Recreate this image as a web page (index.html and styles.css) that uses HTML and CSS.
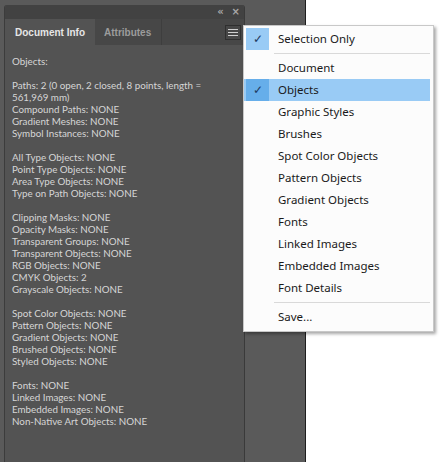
FILE: index.html
```html
<!DOCTYPE html>
<html lang="en">
<head>
    <meta charset="UTF-8">
    <title>Document Info</title>
    <link rel="stylesheet" href="styles.css">
</head>
<body>
    <div class="workspace">
        <div class="panel">
            <div class="titlebar">
                <span class="tb-icon collapse">&laquo;</span>
                <span class="tb-icon close">&times;</span>
            </div>
            <div class="tabs">
                <div class="tab active">Document Info</div>
                <div class="tab">Attributes</div>
                <div class="tab-fill">
                    <div class="menu-btn"><span></span><span></span><span></span></div>
                </div>
            </div>
            <div class="content">
                <p>Objects:</p>
                <p>Paths: 2 (0 open, 2 closed, 8 points, length =<br>561,969 mm)<br>Compound Paths: NONE<br>Gradient Meshes: NONE<br>Symbol Instances: NONE</p>
                <p>All Type Objects: NONE<br>Point Type Objects: NONE<br>Area Type Objects: NONE<br>Type on Path Objects: NONE</p>
                <p>Clipping Masks: NONE<br>Opacity Masks: NONE<br>Transparent Groups: NONE<br>Transparent Objects: NONE<br>RGB Objects: NONE<br>CMYK Objects: 2<br>Grayscale Objects: NONE</p>
                <p>Spot Color Objects: NONE<br>Pattern Objects: NONE<br>Gradient Objects: NONE<br>Brushed Objects: NONE<br>Styled Objects: NONE</p>
                <p>Fonts: NONE<br>Linked Images: NONE<br>Embedded Images: NONE<br>Non-Native Art Objects: NONE</p>
            </div>
        </div>
    </div>

    <div class="menu">
        <div class="item checked"><span class="check">&#10003;</span>Selection Only</div>
        <div class="sep"></div>
        <div class="item">Document</div>
        <div class="item checked hover"><span class="check">&#10003;</span>Objects</div>
        <div class="item">Graphic Styles</div>
        <div class="item">Brushes</div>
        <div class="item">Spot Color Objects</div>
        <div class="item">Pattern Objects</div>
        <div class="item">Gradient Objects</div>
        <div class="item">Fonts</div>
        <div class="item">Linked Images</div>
        <div class="item">Embedded Images</div>
        <div class="item">Font Details</div>
        <div class="sep"></div>
        <div class="item">Save...</div>
    </div>
</body>
</html>
```

FILE: styles.css
```css
html, body { margin: 0; padding: 0; }
body { background: #fff; width: 443px; height: 462px; overflow: hidden; position: relative; }

.workspace { width: 306px; height: 462px; background: #5a5a5a; border-right: 1px solid #1e1e1e; box-sizing: border-box; padding: 5px 0 0 4px; }
.panel { width: 241px; height: 457px; background: #535353; border-left: 1px solid #3c3c3c; border-right: 1px solid #3a3a3a; box-sizing: border-box; display: flex; flex-direction: column; border-radius: 3px 3px 0 0; overflow: hidden; }

.titlebar { height: 14px; background: #424242; display: flex; justify-content: flex-end; align-items: center; padding-right: 4px; gap: 8px; }
.tb-icon { color: #a8a8a8; font-family: "DejaVu Sans", sans-serif; font-size: 10px; line-height: 14px; font-weight: bold; }

.tabs { height: 26px; display: flex; background: #474747; }
.tab { font-family: "Liberation Sans", sans-serif; font-size: 10px; font-weight: bold; color: #9c9c9c; padding: 0 10px 0 9px; line-height: 27px; border-right: 1px solid #3e3e3e; }
.tab.active { background: #535353; color: #e6e6e6; border-right: none; padding: 0 10px; }
.tab-fill { flex: 1; display: flex; justify-content: flex-end; align-items: center; padding-right: 3px; }
.menu-btn { width: 14px; height: 13px; border: 1px solid #2f2f2f; display: flex; flex-direction: column; justify-content: center; align-items: center; gap: 2px; }
.menu-btn span { display: block; width: 10px; height: 1px; background: #d0d0d0; }

.content { flex: 1; padding: 10px 7px 4px; font-family: Lato, sans-serif; font-size: 9.8px; line-height: 12px; color: #d6d6d6; }
.content p { margin: 0 0 12px; }

.menu { position: absolute; left: 243px; top: 25px; width: 189px; background: #fcfcfc; border: 1px solid #c8c8c8; box-shadow: 2px 2px 3px rgba(0,0,0,0.35); padding: 2px 0 3px; font-family: "Noto Sans", sans-serif; font-size: 11.5px; color: #1a1a1a; }
.item { position: relative; height: 22px; line-height: 22px; padding-left: 34px; margin: 0 3px 0 0; }
.item.hover { background: #99cbf5; }
.check { position: absolute; left: 2px; top: 0; width: 23px; height: 22px; background: #99cbf5; color: #1f3a5f; text-align: center; font-size: 12px; }
.item.hover .check { background: #66aeea; }
.sep { height: 1px; background: #d9d9d9; margin: 3px 3px 3px 30px; }
```
